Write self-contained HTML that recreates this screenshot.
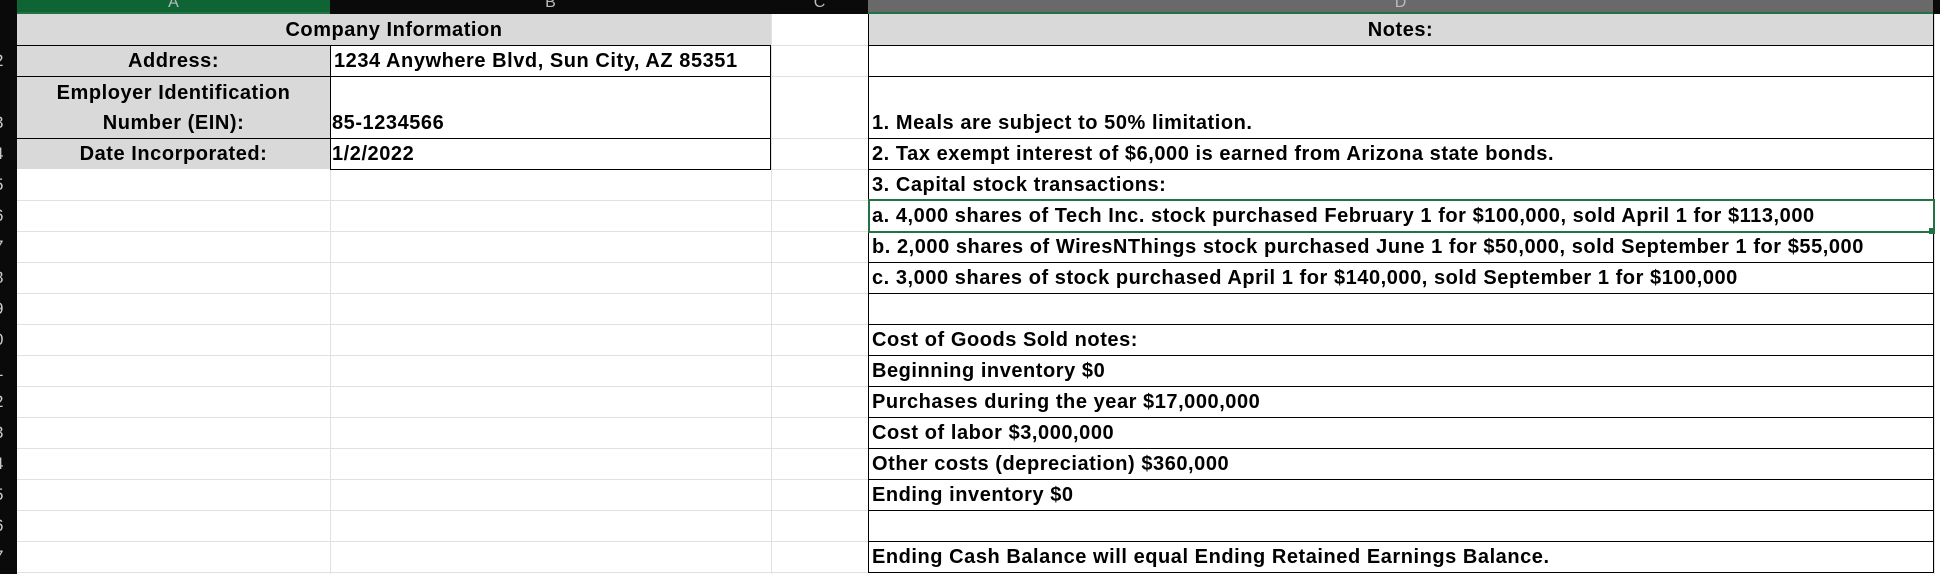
<!DOCTYPE html>
<html><head><meta charset="utf-8"><style>
body{margin:0;width:1940px;height:574px;background:#fff;position:relative;overflow:hidden;font-family:"Liberation Sans",sans-serif;}
div{position:absolute;box-sizing:border-box;}
.t{font-weight:bold;font-size:20px;letter-spacing:0.55px;color:#000;white-space:nowrap;line-height:33px;}
.g{background:#d9d9d9;}
.hl{height:1px;background:#e1e1e1;}
.vl{width:1px;background:#e1e1e1;}
.bk{background:#000;}
.hdr{color:#bbb;font-size:16px;text-align:center;line-height:14px;top:-4px;}
.rn{color:#ccc;font-size:17px;left:-6px;width:20px;line-height:31px;}
</style></head><body>
<div style="left:0;top:0;width:1940px;height:14px;background:#0a0a0a"></div>
<div style="left:17px;top:0;width:313px;height:14px;background:#0f6434"></div>
<div style="left:868px;top:0;width:1065px;height:14px;background:#696969"></div>
<div style="left:868px;top:12px;width:1065px;height:2px;background:#217346"></div>
<div style="left:17px;top:12px;width:313px;height:2px;background:#217346"></div>
<div class="hdr" style="left:17px;width:313px">A</div>
<div class="hdr" style="left:330px;width:441px">B</div>
<div class="hdr" style="left:771px;width:97px">C</div>
<div class="hdr" style="left:868px;width:1065px">D</div>
<div style="left:0;top:14px;width:17px;height:560px;background:#0a0a0a"></div>
<div class="rn" style="top:45px">2</div><div class="rn" style="top:107px">3</div><div class="rn" style="top:138px">4</div><div class="rn" style="top:169px">5</div><div class="rn" style="top:200px">6</div><div class="rn" style="top:231px">7</div><div class="rn" style="top:262px">8</div><div class="rn" style="top:293px">9</div>
<div class="rn" style="top:324px">0</div><div class="rn" style="top:355px">1</div><div class="rn" style="top:386px">2</div><div class="rn" style="top:417px">3</div><div class="rn" style="top:448px">4</div><div class="rn" style="top:479px">5</div><div class="rn" style="top:510px">6</div><div class="rn" style="top:541px">7</div>
<div class="hl" style="left:17px;top:200px;width:1916px"></div>
<div class="hl" style="left:17px;top:231px;width:1916px"></div>
<div class="hl" style="left:17px;top:262px;width:1916px"></div>
<div class="hl" style="left:17px;top:293px;width:1916px"></div>
<div class="hl" style="left:17px;top:324px;width:1916px"></div>
<div class="hl" style="left:17px;top:355px;width:1916px"></div>
<div class="hl" style="left:17px;top:386px;width:1916px"></div>
<div class="hl" style="left:17px;top:417px;width:1916px"></div>
<div class="hl" style="left:17px;top:448px;width:1916px"></div>
<div class="hl" style="left:17px;top:479px;width:1916px"></div>
<div class="hl" style="left:17px;top:510px;width:1916px"></div>
<div class="hl" style="left:17px;top:541px;width:1916px"></div>
<div class="hl" style="left:17px;top:572px;width:1916px"></div>
<div class="hl" style="left:771px;top:45px;width:97px"></div>
<div class="hl" style="left:771px;top:76px;width:97px"></div>
<div class="hl" style="left:771px;top:138px;width:97px"></div>
<div class="hl" style="left:771px;top:169px;width:97px"></div>
<div class="vl" style="left:330px;top:169px;height:405px"></div>
<div class="vl" style="left:771px;top:14px;height:560px"></div>
<div class="vl" style="left:1934px;top:14px;height:560px"></div>
<div class="g" style="left:17px;top:14px;width:754px;height:31px"></div>
<div class="g" style="left:17px;top:45px;width:313px;height:124px"></div>
<div class="t" style="left:17px;top:14px;width:754px;text-align:center">Company Information</div>
<div class="t" style="left:17px;top:45px;width:313px;text-align:center">Address:</div>
<div class="t" style="left:334px;top:45px">1234 Anywhere Blvd, Sun City, AZ 85351</div>
<div class="t" style="left:17px;top:77px;width:313px;text-align:center">Employer Identification</div>
<div class="t" style="left:17px;top:107px;width:313px;text-align:center">Number (EIN):</div>
<div class="t" style="left:332px;top:107px">85-1234566</div>
<div class="t" style="left:17px;top:138px;width:313px;text-align:center">Date Incorporated:</div>
<div class="t" style="left:332px;top:138px">1/2/2022</div>
<div class="bk" style="left:17px;top:45px;width:754px;height:1px"></div>
<div class="bk" style="left:17px;top:76px;width:754px;height:1px"></div>
<div class="bk" style="left:17px;top:138px;width:754px;height:1px"></div>
<div class="bk" style="left:330px;top:169px;width:441px;height:1px"></div>
<div class="bk" style="left:330px;top:45px;width:1px;height:124px"></div>
<div class="bk" style="left:770px;top:45px;width:1px;height:124px"></div>
<div class="g" style="left:868px;top:14px;width:1065px;height:31px"></div>
<div class="t" style="left:868px;top:14px;width:1065px;text-align:center">Notes:</div>
<div class="bk" style="left:868px;top:14px;width:1px;height:559px"></div>
<div class="bk" style="left:1933px;top:14px;width:1px;height:559px"></div>
<div class="bk" style="left:868px;top:45px;width:1066px;height:1px"></div>
<div class="bk" style="left:868px;top:76px;width:1066px;height:1px"></div>
<div class="bk" style="left:868px;top:138px;width:1066px;height:1px"></div>
<div class="bk" style="left:868px;top:169px;width:1066px;height:1px"></div>
<div class="bk" style="left:868px;top:231px;width:1066px;height:1px"></div>
<div class="bk" style="left:868px;top:262px;width:1066px;height:1px"></div>
<div class="bk" style="left:868px;top:293px;width:1066px;height:1px"></div>
<div class="bk" style="left:868px;top:324px;width:1066px;height:1px"></div>
<div class="bk" style="left:868px;top:355px;width:1066px;height:1px"></div>
<div class="bk" style="left:868px;top:386px;width:1066px;height:1px"></div>
<div class="bk" style="left:868px;top:417px;width:1066px;height:1px"></div>
<div class="bk" style="left:868px;top:448px;width:1066px;height:1px"></div>
<div class="bk" style="left:868px;top:479px;width:1066px;height:1px"></div>
<div class="bk" style="left:868px;top:510px;width:1066px;height:1px"></div>
<div class="bk" style="left:868px;top:541px;width:1066px;height:1px"></div>
<div class="bk" style="left:868px;top:572px;width:1066px;height:1px"></div>
<div style="left:868px;top:199px;width:1067px;height:34px;border:2px solid #217346"></div>
<div style="left:1929px;top:228px;width:6px;height:6px;background:#217346"></div>
<div class="t" style="left:872px;top:107px">1. Meals are subject to 50% limitation.</div>
<div class="t" style="left:872px;top:138px">2. Tax exempt interest of $6,000 is earned from Arizona state bonds.</div>
<div class="t" style="left:872px;top:169px">3. Capital stock transactions:</div>
<div class="t" style="left:872px;top:200px">a. 4,000 shares of Tech Inc. stock purchased February 1 for $100,000, sold April 1 for $113,000</div>
<div class="t" style="left:872px;top:231px">b. 2,000 shares of WiresNThings stock purchased June 1 for $50,000, sold September 1 for $55,000</div>
<div class="t" style="left:872px;top:262px">c. 3,000 shares of stock purchased April 1 for $140,000, sold September 1 for $100,000</div>
<div class="t" style="left:872px;top:324px">Cost of Goods Sold notes:</div>
<div class="t" style="left:872px;top:355px">Beginning inventory $0</div>
<div class="t" style="left:872px;top:386px">Purchases during the year $17,000,000</div>
<div class="t" style="left:872px;top:417px">Cost of labor $3,000,000</div>
<div class="t" style="left:872px;top:448px">Other costs (depreciation) $360,000</div>
<div class="t" style="left:872px;top:479px">Ending inventory $0</div>
<div class="t" style="left:872px;top:541px">Ending Cash Balance will equal Ending Retained Earnings Balance.</div>
</body></html>
